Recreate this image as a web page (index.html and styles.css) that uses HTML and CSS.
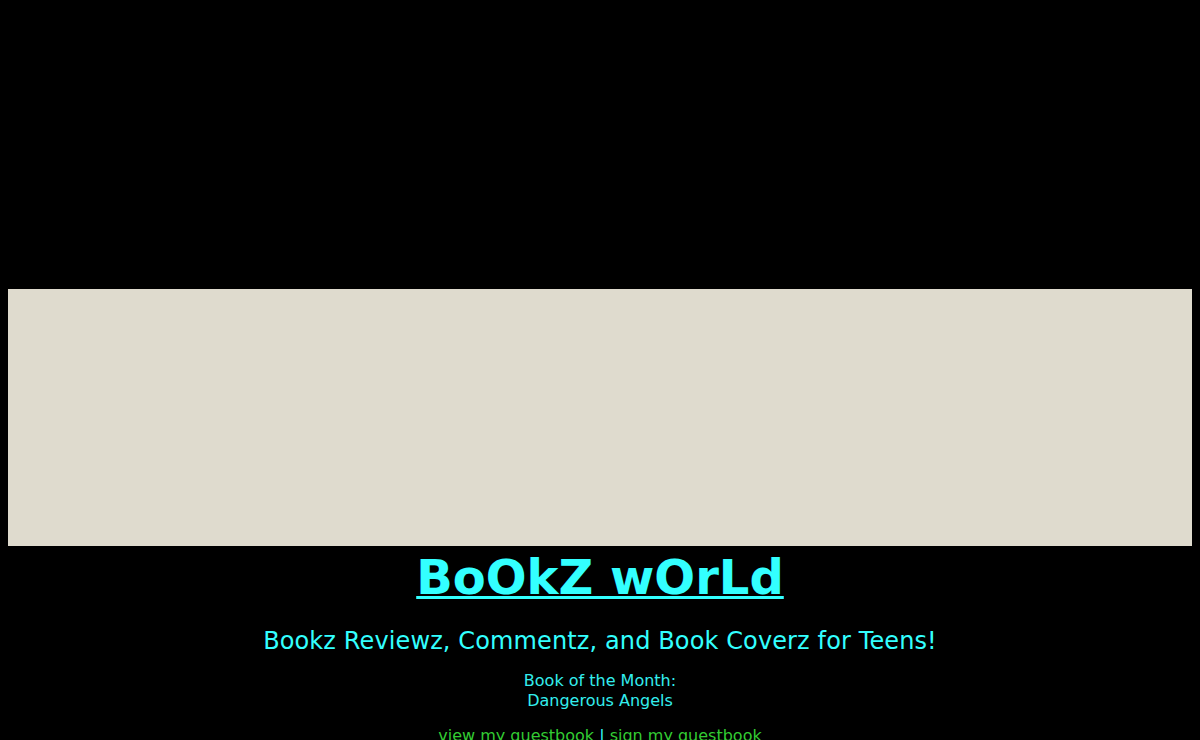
FILE: index.html
```html
<!DOCTYPE html>
<html>
<head>
<meta charset="utf-8">
<title>BoOkZ wOrLd</title>
<link rel="stylesheet" href="styles.css">
</head>
<body>
<div class="top-space"></div>
<div class="embed-box"></div>
<h1 class="title"><a href="#">BoOkZ wOrLd</a></h1>
<h2 class="subtitle">Bookz Reviewz, Commentz, and Book Coverz for Teens!</h2>
<p class="botm">Book of the Month:<br>Dangerous Angels</p>
<p class="guest"><a href="#">view my guestbook</a> | <a href="#">sign my guestbook</a></p>
</body>
</html>
```

FILE: styles.css
```css
html, body {
  background: #000;
}
body {
  margin: 8px;
  font-family: "DejaVu Sans", Verdana, sans-serif;
  color: #33ffff;
  text-align: center;
}
.top-space {
  height: 281px;
}
.embed-box {
  height: 257px;
  background: #dfdbce;
}
.title {
  margin: 3px 0 0;
  font-size: 48px;
  line-height: 56px;
  font-weight: bold;
}
.title a {
  color: #33ffff;
  text-decoration: underline;
  text-decoration-thickness: 3px;
}
.subtitle {
  margin: 21px 0 0;
  font-size: 24px;
  line-height: 30px;
  font-weight: normal;
  letter-spacing: 0.12px;
  color: #33ffff;
}
.botm {
  margin: 15px 0 0;
  font-size: 16px;
  line-height: 20px;
  color: #33eeee;
}
.guest {
  margin: 15px 0 0;
  font-size: 16px;
  line-height: 20px;
  color: #33ffff;
}
.guest a {
  color: #33cc33;
  text-decoration: none;
}
```
